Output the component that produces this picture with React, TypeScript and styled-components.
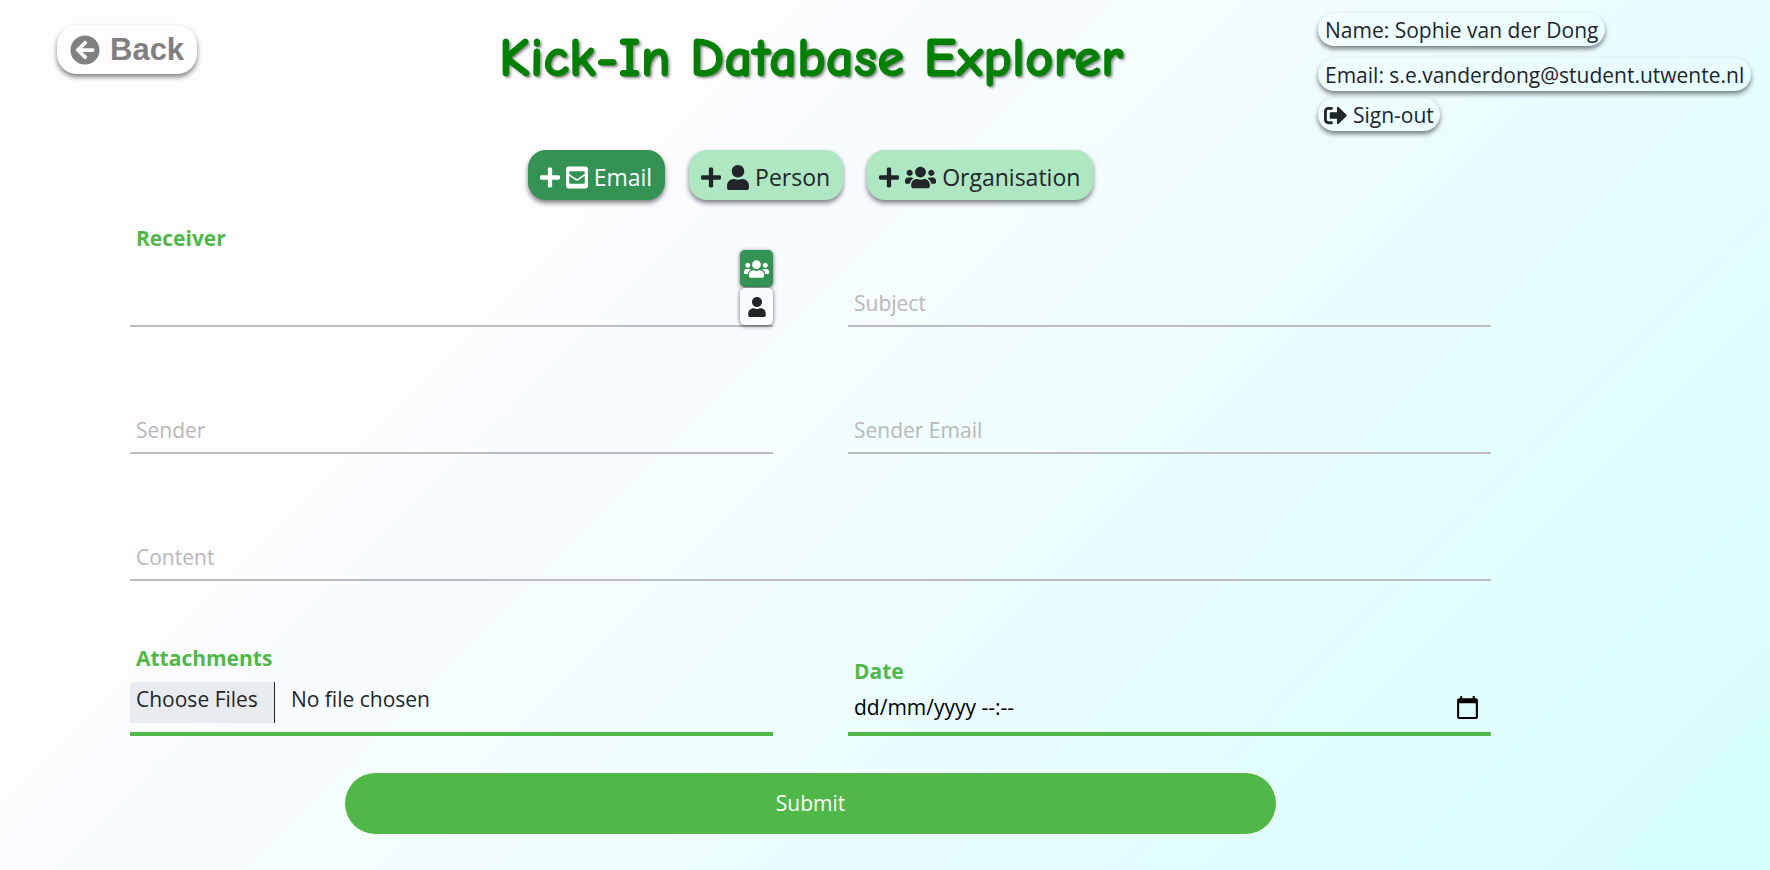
import React, { useState } from "react";
import styled, { createGlobalStyle, css } from "styled-components";
import { FaArrowCircleLeft, FaPlus, FaEnvelopeSquare, FaUser, FaUsers, FaSignOutAlt } from "react-icons/fa";

const Global = createGlobalStyle`
  *, *::before, *::after { box-sizing: border-box; }
  html, body { margin: 0; }
  body {
    min-height: 100vh;
    background: linear-gradient(315deg, #d5fefd 0%, #fffcff 74%) no-repeat;
    font-family: "Open Sans", "Segoe UI", sans-serif;
    font-size: 21px;
    line-height: 33px;
    color: #212529;
  }
  button, input { font: inherit; color: inherit; cursor: pointer; }
  svg { display: block; flex: none; }
`;

const raised = css`
  box-shadow: 0 3px 5px rgba(0, 0, 0, 0.5);
`;

const Header = styled.header`
  display: grid;
  grid-template-columns: 247px minmax(0, 1fr) 433px;
  align-items: start;
  height: 150px;
  padding: 13px 19px 0 57px;
`;

const BackLink = styled.a`
  ${raised}
  justify-self: start;
  display: flex;
  align-items: center;
  gap: 10px;
  height: 49px;
  margin-top: 12px;
  padding: 0 13px;
  border-radius: 20px;
  color: #808080;
  font: bold 31px "Liberation Sans", Arial, sans-serif;
  text-decoration: none;
`;

const Title = styled.h1`
  margin: 0;
  padding-top: 10px;
  color: #008000;
  font: bold 55px/70px "Comic Sans MS", "Comic Neue", Lato, sans-serif;
  -webkit-text-stroke: 1px #008000;
  text-align: center;
  text-shadow: 2px 2px 3px rgba(0, 0, 0, 0.5);
  white-space: nowrap;
`;

const Account = styled.div`
  display: flex;
  flex-direction: column;
  align-items: flex-start;
`;

const Pill = styled.span`
  ${raised}
  display: flex;
  align-items: center;
  gap: 6px;
  height: 33px;
  margin-bottom: 12px;
  padding: 2px 7px 0;
  border: 0;
  border-radius: 17px;
  background: none;
  white-space: nowrap;
`;

const SignOut = styled(Pill)`
  margin-top: -5px;
  padding: 2px 6px 0;
`;

const Main = styled.main`
  margin: 0 279px 0 130px;
`;

const Tabs = styled.nav`
  display: flex;
  justify-content: center;
  gap: 24px;
`;

const Tab = styled.button<{ $active?: boolean }>`
  ${raised}
  display: flex;
  align-items: center;
  gap: 6px;
  height: 50px;
  padding: 4px 13px 0 12px;
  border: 0;
  border-radius: 18px;
  font-size: 23px;
  background: ${(p) => (p.$active ? "#349254" : "#aee7c2")};
  color: ${(p) => (p.$active ? "#fff" : "#212529")};
`;

/* Each glyph gets a box of its own proportions, so none is padded to a square. */
const PlusIcon = styled(FaPlus)`width: 20px; height: 23px;`;
const MailIcon = styled(FaEnvelopeSquare)`width: 22px; height: 25px;`;
const PersonIcon = styled(FaUser)`width: 22px; height: 25px;`;
const GroupIcon = styled(FaUsers)`width: 31px; height: 25px;`;
const SmallPersonIcon = styled(FaUser)`width: 18px; height: 20px;`;
const SmallGroupIcon = styled(FaUsers)`width: 25px; height: 20px;`;

const Form = styled.form`
  display: grid;
  grid-template-columns: 1fr 1fr;
  column-gap: 75px;
`;

const Field = styled.div<{ $wide?: boolean; $strong?: boolean }>`
  position: relative;
  display: flex;
  flex-direction: column;
  justify-content: flex-end;
  min-height: ${(p) => (p.$strong ? 155 : 127)}px;
  grid-column: ${(p) => (p.$wide ? "1 / -1" : "auto")};
  border-bottom: ${(p) => (p.$strong ? "4px solid #50b848" : "2px solid #bdbdbd")};
`;

const Label = styled.label`
  padding-left: 6px;
  color: #50b848;
  font-weight: bold;
`;

const TextInput = styled.input<{ $tall?: boolean }>`
  width: 100%;
  height: ${(p) => (p.$tall ? 70 : 44)}px;
  padding: 0 6px;
  border: 0;
  outline: 0;
  background: none;
  cursor: text;

  &::placeholder { color: #b8b8b8; opacity: 1; }
`;

const DateRow = styled.div`
  display: flex;
  align-items: center;
  height: 44px;
  padding: 0 11px 6px 0;
`;

const DateInput = styled(TextInput)`
  flex: 1;
  min-width: 0;
  height: 38px;
  &::placeholder { color: #000; }
`;

const CalendarButton = styled.button`
  padding: 0;
  border: 0;
  background: none;
  color: #000;
`;

const FileInput = styled.input`
  width: 100%;
  height: 57px;
  padding-top: 7px;

  &::file-selector-button {
    height: 41px;
    margin: 0 16px 0 0;
    padding: 0 16px 6px 6px;
    border: 0;
    border-right: 1px solid #212529;
    border-radius: 4px 0 0 0;
    background: #e9ecef;
    color: #212529;
    font: inherit;
  }
`;

const KindSwitch = styled.div`
  position: absolute;
  right: 0;
  bottom: 0;
  display: flex;
  flex-direction: column;
  gap: 1px;
`;

const KindButton = styled.button<{ $active: boolean }>`
  display: grid;
  place-items: center;
  width: 33px;
  height: 37px;
  padding: 0;
  border: 0;
  border-radius: 5px;
  box-shadow: 0 1px 4px rgba(0, 0, 0, 0.6);
  background: ${(p) => (p.$active ? "#349254" : "#f8fdff")};
  color: ${(p) => (p.$active ? "#fff" : "#212529")};
`;

const Submit = styled.button`
  grid-column: 1 / -1;
  height: 63px;
  margin: 36px 214px 24px;
  border: 1px solid #fff;
  border-radius: 32px;
  background: #50b848;
  color: #fff;
`;

const CalendarIcon = () => (
  <svg width="25" height="25" viewBox="0 0 24 24" fill="currentColor" aria-hidden="true">
    <path d="M20 3h-1V1h-2v2H7V1H5v2H4c-1.1 0-2 .9-2 2v16c0 1.1.9 2 2 2h16c1.1 0 2-.9 2-2V5c0-1.1-.9-2-2-2zm0 18H4V8h16v13z" />
  </svg>
);

const tabs = [
  { name: "Email", Icon: MailIcon },
  { name: "Person", Icon: PersonIcon },
  { name: "Organisation", Icon: GroupIcon },
];

export default function App() {
  const [tab, setTab] = useState("Email");
  const [group, setGroup] = useState(true);

  return (
    <>
      <Global />
      <Header>
        <BackLink href="#"><FaArrowCircleLeft size={30} />Back</BackLink>
        <Title>Kick-In Database Explorer</Title>
        <Account>
          <Pill>Name: Sophie van der Dong</Pill>
          <Pill>Email: s.e.vanderdong@student.utwente.nl</Pill>
          <SignOut as="button" type="button"><FaSignOutAlt size={23} />Sign-out</SignOut>
        </Account>
      </Header>
      <Main>
        <Tabs>
          {tabs.map(({ name, Icon }) => (
            <Tab key={name} type="button" $active={tab === name} onClick={() => setTab(name)}>
              <PlusIcon /><Icon />{name}
            </Tab>
          ))}
        </Tabs>
        <Form onSubmit={(e) => e.preventDefault()}>
          <Field>
            <Label htmlFor="receiver">Receiver</Label>
            <TextInput id="receiver" $tall />
            <KindSwitch>
              <KindButton type="button" aria-label="Groups" $active={group} onClick={() => setGroup(true)}>
                <SmallGroupIcon />
              </KindButton>
              <KindButton type="button" aria-label="Person" $active={!group} onClick={() => setGroup(false)}>
                <SmallPersonIcon />
              </KindButton>
            </KindSwitch>
          </Field>
          <Field><TextInput aria-label="Subject" placeholder="Subject" /></Field>
          <Field><TextInput aria-label="Sender" placeholder="Sender" /></Field>
          <Field><TextInput aria-label="Sender Email" placeholder="Sender Email" /></Field>
          <Field $wide><TextInput aria-label="Content" placeholder="Content" /></Field>
          <Field $strong>
            <Label htmlFor="attachments">Attachments</Label>
            <FileInput id="attachments" type="file" multiple />
          </Field>
          <Field $strong>
            <Label htmlFor="date">Date</Label>
            <DateRow>
              <DateInput id="date" placeholder="dd/mm/yyyy --:--" />
              <CalendarButton type="button" aria-label="Pick a date"><CalendarIcon /></CalendarButton>
            </DateRow>
          </Field>
          <Submit type="submit">Submit</Submit>
        </Form>
      </Main>
    </>
  );
}
